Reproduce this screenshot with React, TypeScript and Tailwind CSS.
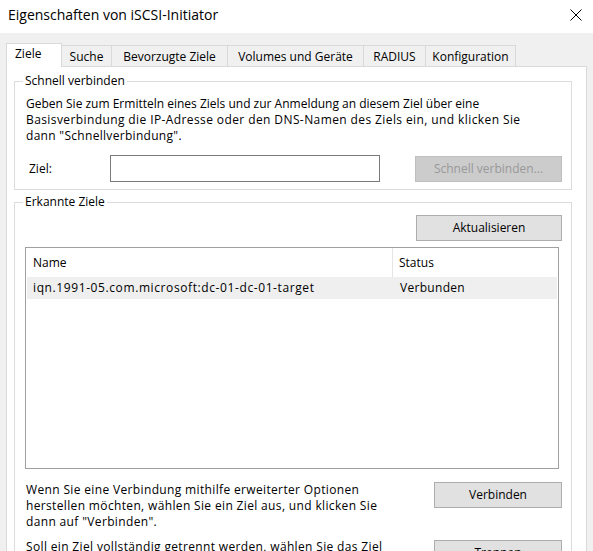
import React from "react";

const tabs = ["Ziele", "Suche", "Bevorzugte Ziele", "Volumes und Geräte", "RADIUS", "Konfiguration"];
const tabWidths = ["w-[56px]", "w-[50px]", "w-[116px]", "w-[136px]", "w-[62px]", "w-[90px]"];

function Button({ label, width, disabled }: { label: string; width: string; disabled?: boolean }) {
  return (
    <div
      className={`${width} h-[26px] flex items-center justify-center border ${
        disabled ? "bg-[#cccccc] border-[#bfbfbf] text-[#999999]" : "bg-[#e1e1e1] border-[#adadad] text-black"
      }`}
    >
      {label}
    </div>
  );
}

export default function App() {
  return (
    <div className="w-[593px] h-[551px] overflow-hidden bg-[#f0f0f0] flex flex-col text-[12px] leading-[16px] text-black font-['Segoe_UI','Open_Sans',sans-serif]">
      {/* Title bar */}
      <div className="h-[33px] bg-white flex items-center justify-between pl-[8px] pr-[11px] shrink-0">
        <span className="text-[14px] leading-[20px] -mt-[4px]">Eigenschaften von iSCSI-Initiator</span>
        <svg width="12" height="12" viewBox="0 0 12 12" className="-mt-[4px]">
          <path d="M0.5 0.5 L11.5 11.5 M11.5 0.5 L0.5 11.5" stroke="#000" strokeWidth="1" fill="none" />
        </svg>
      </div>

      <div className="pl-[6px] pt-[10px]">
        {/* Tabs */}
        <div className="flex items-end h-[23px]">
          {tabs.map((t, i) =>
            i === 0 ? (
              <div
                key={t}
                className={`${tabWidths[i]} h-[24px] -mb-px relative z-10 bg-white border border-b-0 border-[#d9d9d9] pl-[8px] pt-[2px]`}
              >
                {t}
              </div>
            ) : (
              <div
                key={t}
                className={`${tabWidths[i]} h-[21px] border-t border-r border-[#d9d9d9] flex items-center justify-center pt-px`}
              >
                {t}
              </div>
            )
          )}
        </div>

        {/* Panel */}
        <div className="w-[581px] h-[500px] bg-white border border-[#d9d9d9] pl-[7px] pt-[6px]">
          <fieldset className="w-[558px] border border-[#dcdcdc] pl-[11px] pr-[9px] pb-[7px]">
            <legend className="-ml-[3px] px-[2px]">Schnell verbinden</legend>
            <p className="mt-[7px]">
              Geben Sie zum Ermitteln eines Ziels und zur Anmeldung an diesem Ziel über eine
              <br />
              <span className="tracking-[0.4px]">
                Basisverbindung die IP-Adresse oder den DNS-Namen des Ziels ein, und klicken Sie
              </span>
              <br />
              <span className="tracking-[0.3px]">dann "Schnellverbindung".</span>
            </p>
            <div className="flex items-center mt-[11px]">
              <span className="w-[84px] pl-[3px]">Ziel:</span>
              <div className="w-[270px] h-[27px] border border-[#7a7a7a] bg-white" />
              <div className="ml-[35px]">
                <Button label="Schnell verbinden..." width="w-[147px]" disabled />
              </div>
            </div>
          </fieldset>

          <fieldset className="w-[558px] mt-[4px] border border-[#dcdcdc] pl-[10px] pr-[9px] pb-[20px]">
            <legend className="-ml-[2px] px-[2px]">Erkannte Ziele</legend>
            <div className="flex justify-end mt-[5px]">
              <Button label="Aktualisieren" width="w-[146px]" />
            </div>
            <div className="mt-[6px] w-[534px] h-[222px] border border-[#a0a0a0] bg-white">
              <div className="flex h-[29px]">
                <div className="w-[367px] border-r border-[#e5e5e5] flex items-center pl-[7px]">Name</div>
                <div className="flex items-center pl-[6px]">Status</div>
              </div>
              <div className="flex h-[22px] items-center bg-[#efefef] mx-px">
                <div className="w-[366px] pl-[6px] tracking-[0.6px]">iqn.1991-05.com.microsoft:dc-01-dc-01-target</div>
                <div className="pl-[7px] tracking-[0.3px]">Verbunden</div>
              </div>
            </div>

            <div className="flex justify-between items-start mt-[13px] pl-px">
              <p className="tracking-[0.35px]">
                Wenn Sie eine Verbindung mithilfe erweiterter Optionen
                <br />
                herstellen möchten, wählen Sie ein Ziel aus, und klicken Sie
                <br />
                dann auf "Verbinden".
              </p>
              <Button label="Verbinden" width="w-[128px]" />
            </div>
            <div className="flex justify-between items-start mt-[9px] pl-px">
              <p className="tracking-[0.35px]">
                Soll ein Ziel vollständig getrennt werden, wählen Sie das Ziel
                <br />
                aus, und klicken Sie dann auf "Trennen".
              </p>
              <div className="mt-px">
                <Button label="Trennen" width="w-[128px]" />
              </div>
            </div>
          </fieldset>
        </div>
      </div>
    </div>
  );
}
